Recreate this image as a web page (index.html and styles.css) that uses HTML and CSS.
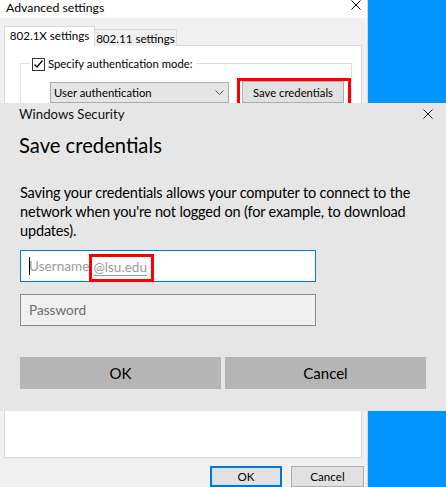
FILE: index.html
```html
<!DOCTYPE html>
<html lang="en">
<head>
    <meta charset="UTF-8">
    <title>Advanced settings - Save credentials</title>
    <link rel="stylesheet" href="styles.css">
</head>
<body>
    <div class="screen">
        <div class="window">
            <div class="titlebar">
                <span class="title">Advanced settings</span>
                <svg class="close" width="10" height="10" viewBox="0 0 10 10"><path d="M0.5 0.5 L9.5 9.5 M9.5 0.5 L0.5 9.5" stroke="#000" stroke-width="1"/></svg>
            </div>
            <div class="window-body">
                <div class="tabs">
                    <div class="tab active">802.1X settings</div>
                    <div class="tab">802.11 settings</div>
                </div>
                <div class="panel">
                    <fieldset class="group">
                        <legend>
                            <span class="checkbox">
                                <svg width="11" height="11" viewBox="0 0 11 11"><path d="M1.5 5.5 L4 8 L9.5 1.5" fill="none" stroke="#000" stroke-width="1.2"/></svg>
                            </span>
                            Specify authentication mode:
                        </legend>
                        <div class="group-row">
                            <div class="select">
                                <span>User authentication</span>
                                <svg width="9" height="5" viewBox="0 0 9 5"><path d="M0.5 0.5 L4.5 4.5 L8.5 0.5" fill="none" stroke="#555" stroke-width="1"/></svg>
                            </div>
                            <div class="highlight">
                                <button class="win-btn save-btn">Save credentials</button>
                            </div>
                        </div>
                    </fieldset>
                </div>
                <div class="footer">
                    <button class="win-btn default">OK</button>
                    <button class="win-btn">Cancel</button>
                </div>
            </div>
        </div>
        <div class="desktop"></div>
    </div>

    <!-- credential prompt lies over the settings window -->
    <div class="security">
        <div class="security-head">
            <span>Windows Security</span>
            <svg width="10" height="10" viewBox="0 0 10 10"><path d="M0.5 0.5 L9.5 9.5 M9.5 0.5 L0.5 9.5" stroke="#222" stroke-width="1"/></svg>
        </div>
        <h1 class="security-title">Save credentials</h1>
        <p class="security-text">Saving your credentials allows your computer to connect to the network when you're not logged on (for example, to download updates).</p>
        <div class="field focused">
            <span class="caret"></span>
            <span class="placeholder">Username</span><span class="domain">@lsu.edu</span>
        </div>
        <div class="field">
            <span class="placeholder dark">Password</span>
        </div>
        <div class="actions">
            <button class="flat-btn">OK</button>
            <button class="flat-btn">Cancel</button>
        </div>
    </div>
</body>
</html>
```
FILE: styles.css
```css
body {
    margin: 0;
    font-family: Lato, "Noto Sans", sans-serif;
    color: #000;
    overflow: hidden;
}
.screen {
    display: flex;
    width: 446px;
    height: 487px;
}
.window {
    width: 367px;
    border-right: 1px solid #d6d6d6;
    background-color: #f0f0f0;
    display: flex;
    flex-direction: column;
}
.titlebar {
    height: 24px;
    background-color: #fff;
    display: flex;
    align-items: center;
    justify-content: space-between;
    padding: 0 6px 0 6px;
    font-size: 12.3px;
}
.titlebar .title {
    margin-top: -3px;
}
.titlebar .close {
    margin-top: -8px;
}
.window-body {
    flex: 1;
    padding: 8px 5px 0 4px;
}
.tabs {
    display: flex;
    align-items: flex-end;
    font-size: 11.6px;
    height: 20px;
    margin-bottom: -1px;
    position: relative;
    white-space: nowrap;
}
.tab {
    height: 17px;
    width: 82px;
    box-sizing: border-box;
    border: 1px solid #d9d9d9;
    border-left: none;
    border-bottom: none;
    background-color: #f0f0f0;
    text-align: center;
    line-height: 17px;
}
.tab.active {
    height: 20px;
    width: 91px;
    border-left: 1px solid #d9d9d9;
    background-color: #fff;
    line-height: 18px;
}
.panel {
    height: 401px;
    border: 1px solid #d9d9d9;
    background-color: #fff;
    padding-top: 10px;
}
.group {
    margin: 0 13px 0 15px;
    padding: 0;
    height: 90px;
    border: 1px solid #dcdcdc;
    font-size: 11.3px;
}
.group legend {
    margin-left: 8px;
    padding: 0 3px;
    line-height: 15px;
    display: flex;
    align-items: flex-end;
    gap: 3px;
}
.checkbox {
    width: 11px;
    height: 11px;
    border: 1px solid #333;
    display: inline-flex;
    background-color: #fff;
}
.group-row {
    display: flex;
    align-items: flex-start;
    padding-left: 29px;
    margin-top: 11px;
    gap: 8px;
}
.select {
    width: 179px;
    height: 21px;
    box-sizing: border-box;
    border: 1px solid #acacac;
    background-color: #e5e5e5;
    display: flex;
    align-items: center;
    justify-content: space-between;
    padding: 0 4px 0 3px;
}
.highlight {
    border: 3px solid #f00;
    padding: 0 4px 0 2px;
    margin-top: -4px;
}
.win-btn {
    font-family: inherit;
    font-size: 11.6px;
    color: #000;
    background-color: #e1e1e1;
    border: 1px solid #adadad;
    padding: 0;
    height: 21px;
}
.save-btn {
    width: 102px;
    height: 22px;
    display: block;
    font-size: 11.3px;
}
.footer {
    display: flex;
    justify-content: flex-end;
    gap: 9px;
    margin: 8px -2px 0 0;
}
.footer .win-btn {
    width: 73px;
}
.footer .default {
    width: 72px;
    border: 2px solid #0078d7;
}
.desktop {
    flex: 1;
    background-color: #0094ff;
}

/* Windows Security prompt */
.security {
    position: absolute;
    top: 103px;
    left: 0;
    width: 446px;
    height: 308px;
    box-sizing: border-box;
    background-color: #e6e6e6;
    padding: 0 20px 0 20px;
}
.security-head {
    display: flex;
    justify-content: space-between;
    align-items: center;
    height: 22px;
    margin: 0 -7px 0 -1px;
    font-size: 13.2px;
    color: #111;
}
.security-title {
    font-size: 20.2px;
    font-weight: normal;
    margin: 6px 0 0 -1px;
    line-height: 28px;
}
.security-text {
    font-size: 14.5px;
    letter-spacing: -0.15px;
    line-height: 19px;
    margin: 24px -10px 0 0;
}
.field {
    width: 296px;
    height: 32px;
    box-sizing: border-box;
    border: 1px solid #8a8a8a;
    background-color: #f0f0f0;
    display: flex;
    align-items: center;
    padding-left: 8px;
    font-size: 13.6px;
    margin-top: 12px;
    position: relative;
}
.field.focused {
    border-color: #0078d7;
    background-color: #fff;
    margin-top: 10px;
    align-items: stretch;
}
.field.focused .placeholder {
    line-height: 30px;
}
.caret {
    position: absolute;
    left: 8px;
    top: 6px;
    width: 1px;
    height: 18px;
    background-color: #000;
}
.placeholder {
    color: #9a9a9a;
}
.placeholder.dark {
    color: #6d6d6d;
}
.domain {
    color: #9a9a9a;
    text-decoration: underline;
    text-underline-offset: 3px;
    border: 3px solid #f00;
    padding: 0 4px 0 1px;
    margin-top: 3px;
    height: 22px;
    line-height: 21px;
}
.actions {
    display: flex;
    gap: 4px;
    margin-top: 31px;
}
.flat-btn {
    flex: 1;
    height: 32px;
    border: none;
    background-color: #b5b5b5;
    font-family: inherit;
    font-size: 15px;
    color: #000;
}
```
